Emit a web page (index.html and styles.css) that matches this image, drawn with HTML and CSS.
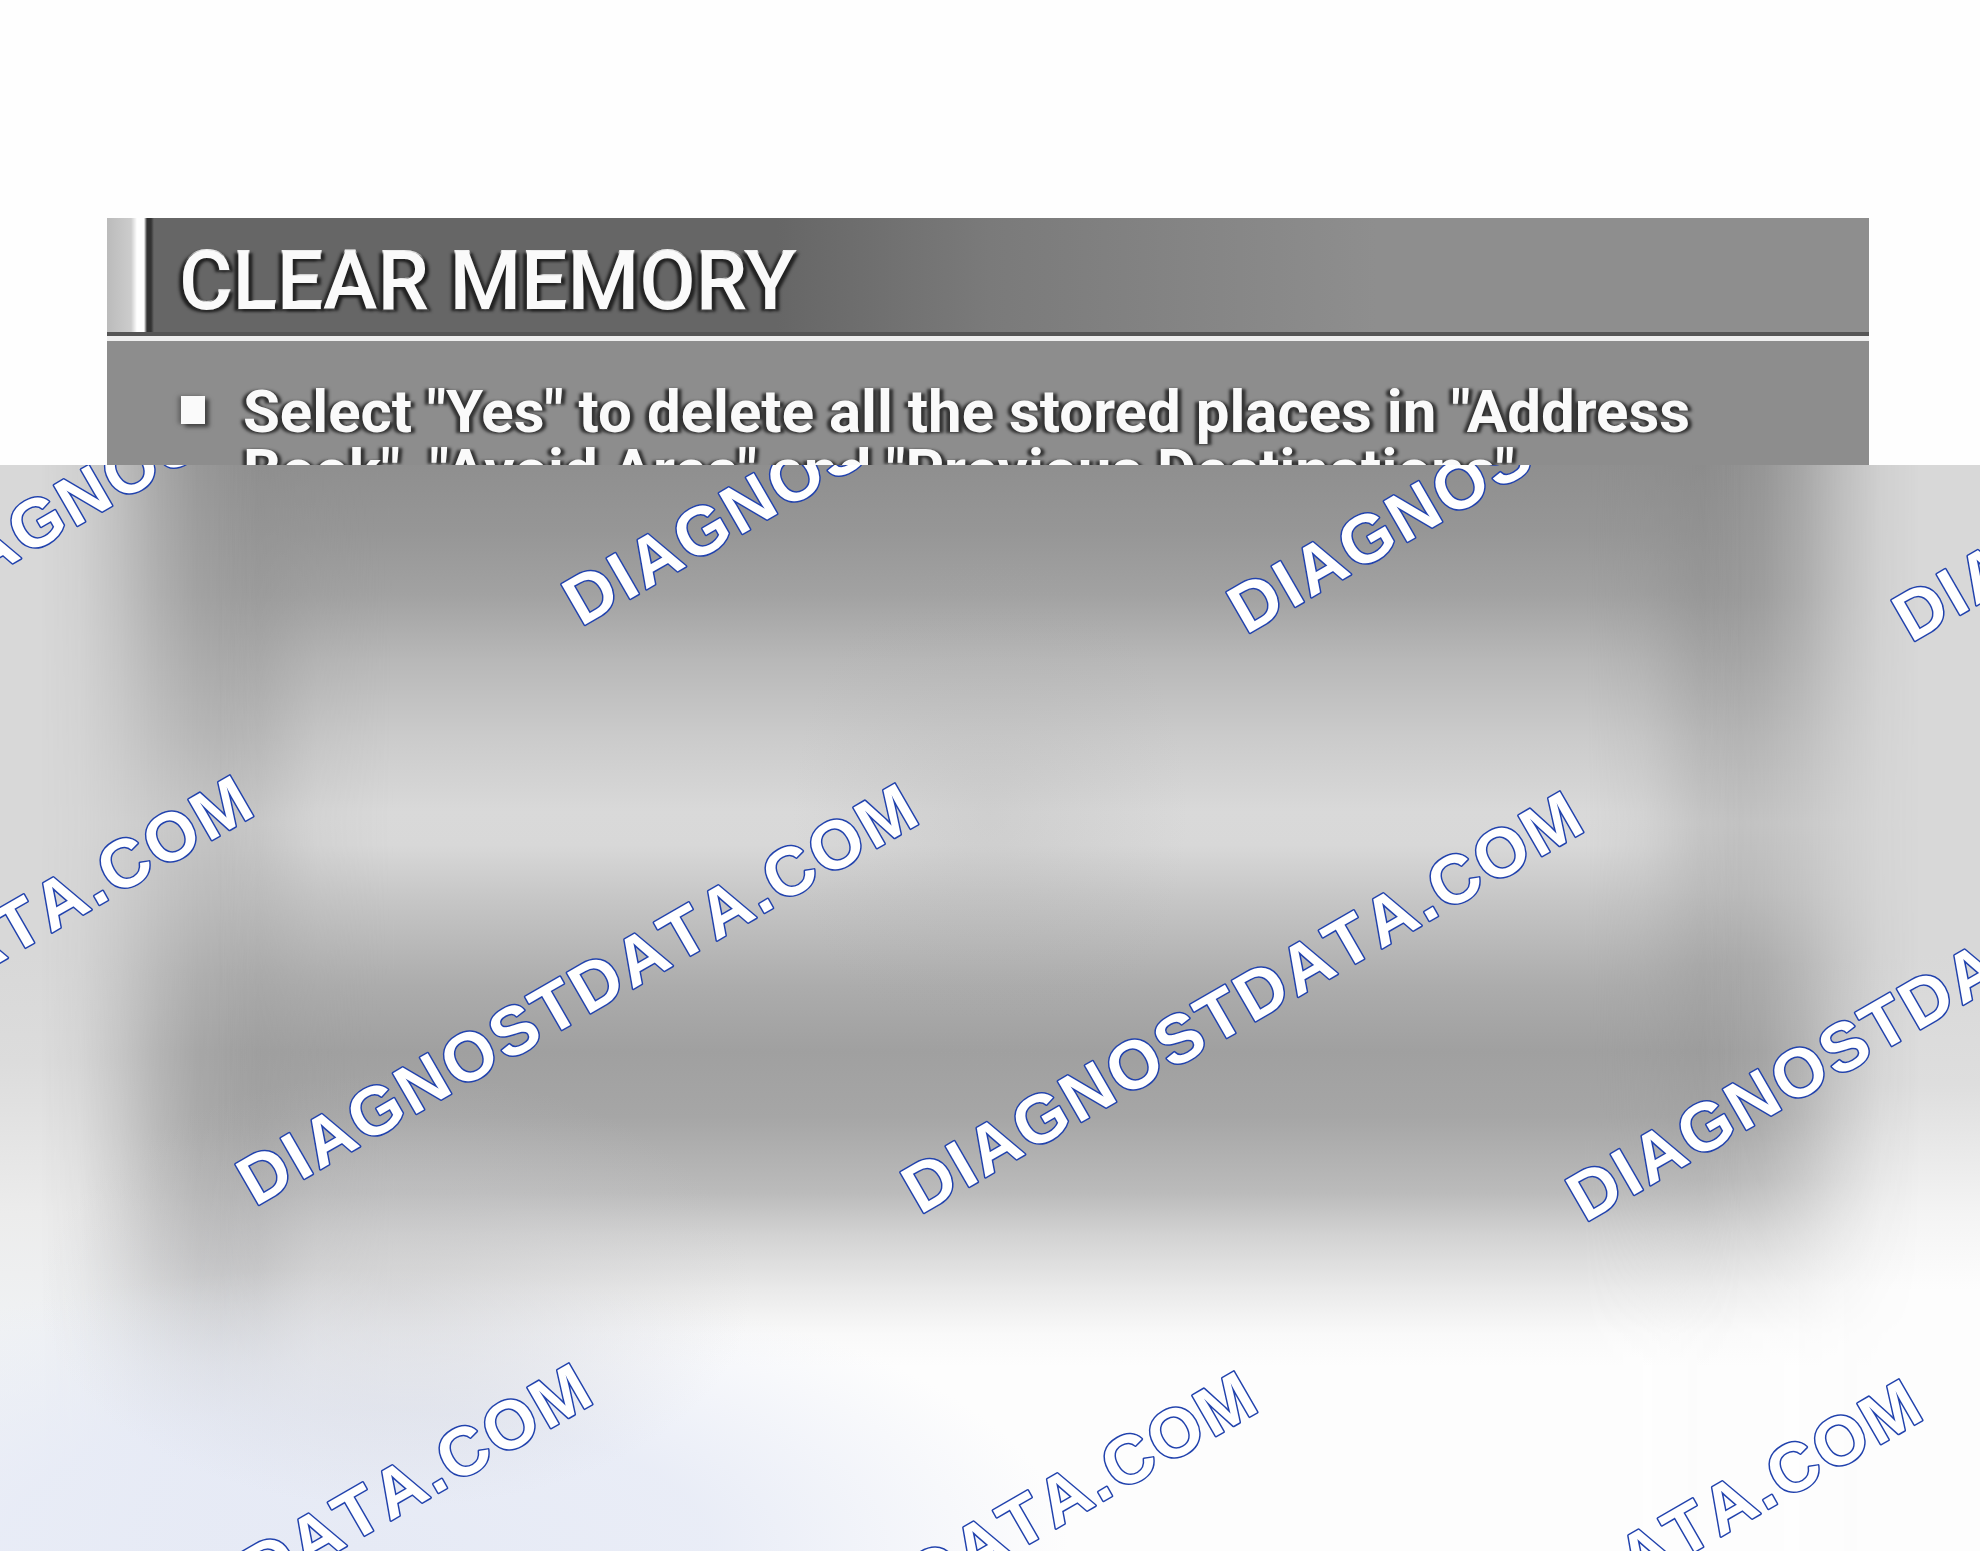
FILE: index.html
```html
<!DOCTYPE html>
<html lang="en">
<head>
<meta charset="utf-8">
<meta name="viewport" content="width=device-width, initial-scale=1">
<title>Clear Memory</title>
<link rel="stylesheet" href="styles.css">
</head>
<body>
<main class="page">
  <section class="panel">
    <header class="panel-header">
      <h1 class="panel-title">CLEAR MEMORY</h1>
    </header>
    <ul class="notes">
      <li class="note">Select "Yes" to delete all the stored places in "Address<br>Book", "Avoid Area" and "Previous Destinations".</li>
    </ul>
  </section>
  <section class="preview">
    <div class="shade shade-left"></div>
    <div class="shade shade-right"></div>
    <div class="shade shade-center"></div>
    <div class="shade shade-glow"></div>
    <svg class="watermark" aria-hidden="true">
      <text transform="translate(-84 154) rotate(-30)">DIAGNOSTDATA.COM</text>
      <text transform="translate(581 162) rotate(-30)">DIAGNOSTDATA.COM</text>
      <text transform="translate(1246 170) rotate(-30)">DIAGNOSTDATA.COM</text>
      <text transform="translate(1911 178) rotate(-30)">DIAGNOSTDATA.COM</text>
      <text transform="translate(-410 734) rotate(-30)">DIAGNOSTDATA.COM</text>
      <text transform="translate(255 742) rotate(-30)">DIAGNOSTDATA.COM</text>
      <text transform="translate(920 750) rotate(-30)">DIAGNOSTDATA.COM</text>
      <text transform="translate(1585 758) rotate(-30)">DIAGNOSTDATA.COM</text>
      <text transform="translate(-71 1322) rotate(-30)">DIAGNOSTDATA.COM</text>
      <text transform="translate(594 1330) rotate(-30)">DIAGNOSTDATA.COM</text>
      <text transform="translate(1259 1338) rotate(-30)">DIAGNOSTDATA.COM</text>
    </svg>
  </section>
</main>
</body>
</html>
```
FILE: styles.css
```css
* {
  box-sizing: border-box;
}

body {
  margin: 0;
  background: #fefefe;
  font-family: Roboto, "Liberation Sans", Arial, sans-serif;
}

.page {
  display: flex;
  flex-direction: column;
  min-height: 100vh;
}

/* Navigation screen */
.panel {
  height: 247px;
  margin: 218px 5.6% 0 5.4%;
  overflow: hidden;
  background: #8d8d8d;
  color: #fafafa;
}

.panel-header {
  display: flex;
  align-items: center;
  height: 123px;
  padding: 8px 0 0 72px;
  border-bottom: 5px solid #eee;
  background:
    linear-gradient(#555, #555) bottom / 100% 4px no-repeat,
    linear-gradient(90deg, #bbb, #ccc 24px, #fff 30px, #fff 37px, #333 40px, #333 44px, transparent 47px),
    linear-gradient(90deg, #666 38%, #7a7a7a 50%, #8e8e8e 72%);
}

.panel-title {
  margin: 0;
  font-size: 82px;
  font-weight: 500;
  line-height: 100px;
  white-space: nowrap;
  -webkit-text-stroke: 2px #fafafa;
  paint-order: stroke;
  text-shadow: -4px 2px 3px #222, 4px 2px 3px #222;
}

.notes {
  margin: 0;
  padding: 41px 0 0 74px;
  list-style: none;
}

.note {
  display: flex;
  gap: 38px;
  font-size: 60px;
  font-weight: 700;
  line-height: 59px;
  white-space: nowrap;
  text-shadow: -4px 1px 3px #333, 4px 1px 3px #333;
}

.note::before {
  content: "";
  flex: none;
  width: 24px;
  height: 28px;
  margin-top: 14px;
  background: #fafafa;
  box-shadow: 4px 3px 4px #444, -3px 0 4px #666;
}

/* Obscured part of the screen */
.preview {
  display: grid;
  flex: 1;
  overflow: hidden;
  position: relative;
  background:
    linear-gradient(#d8d8d8 45%, #dcdcdc 55%, #ececec 69%, #f0f2f4 80%, #f1f3f8) left / 50% 100% no-repeat,
    linear-gradient(#d8d8d8 45%, #dedede 57%, #f4f4f4 69%, #fdfdfd 76%) right / 50% 100% no-repeat;
}

.shade {
  grid-area: 1 / 1;
}

.shade-left {
  background: linear-gradient(#8f8f8f, #9a9a9a 12%, #a5a5a5 18%, #b2b2b2 25%, #c3c3c3 33%, #b8b8b8 40%, #a9a9a9 47%, #9f9f9f 54%, #a2a2a2 61%, #adadad 67%, #bdbdbe 73%, #d0d1d2 78%, #dddfe2 83%, #e1e3e8 89%, #e5e8f2 95%);
  mask-image: linear-gradient(90deg, transparent 2%, rgba(0, 0, 0, .1) 4%, rgba(0, 0, 0, .35) 6%, rgba(0, 0, 0, .65) 8%, rgba(0, 0, 0, .88) 10%, #000 13%, #000 50%, transparent 50%);
}

.shade-right {
  background: linear-gradient(#8c8c8c, #959595 12%, #a1a1a1 18%, #b1b1b1 25%, #c0c0c0 33%, #b8b8b8 39%, #a6a6a6 46%, #9c9c9c 54%, #a3a3a3 60%, #b8b8b8 66%, #d4d4d4 71%, #ededed 76%, #fafafa 80%, #fdfdfd 83%);
  mask-image: linear-gradient(270deg, transparent 3%, rgba(0, 0, 0, .1) 5%, rgba(0, 0, 0, .35) 7%, rgba(0, 0, 0, .65) 9%, rgba(0, 0, 0, .88) 11%, #000 14%, #000 50%, transparent 50%);
}

.shade-center {
  background: linear-gradient(#8f8f8f, #969696 6%, #a2a2a2 12%, #b8b8b8 18%, #cbcbcb 25%, #d9d9d9 32%, #d8d8d8 35%, #c6c6c6 40%, #acacac 48%, #a0a0a0 54%, #a6a6a6 60%, #bbbbbb 67%, #d3d3d3 71%, #eaeaea 76%, #f9f9f9 80%, #fdfdfd 83%);
  mask-image: linear-gradient(90deg, transparent 11%, rgba(0, 0, 0, .2) 13%, rgba(0, 0, 0, .75) 16%, #000 20%, #000 80%, rgba(0, 0, 0, .75) 83%, rgba(0, 0, 0, .2) 86%, transparent 88%);
}

.shade-glow {
  z-index: 1;
  background:
    radial-gradient(18% 20% at 20% 76%, rgba(190, 190, 192, .4), rgba(200, 200, 203, .25) 50%, rgba(215, 216, 220, 0)),
    radial-gradient(36% 26% at 18% 100%, rgba(230, 234, 245, 1), rgba(231, 235, 246, .9) 50%, rgba(244, 246, 251, 0)),
    radial-gradient(10% 24% at 50% 32%, rgba(165, 165, 165, .2), transparent);
}

.watermark {
  z-index: 2;
  position: absolute;
  inset: 0;
  width: 100%;
  height: 100%;
  fill: #fff;
  stroke: #2142ad;
  stroke-width: 3px;
  stroke-linejoin: round;
  paint-order: stroke;
  font-family: "Liberation Sans", Arial, sans-serif;
  font-size: 68px;
  font-weight: 700;
  font-kerning: none;
  letter-spacing: 3px;
}
```
